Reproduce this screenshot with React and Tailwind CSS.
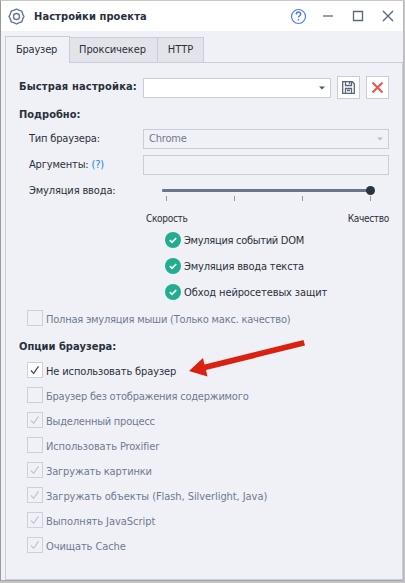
import React from "react";

const options = [
  ["Не использовать браузер", true, true, "tracking-[-0.13px]"],
  ["Браузер без отображения содержимого", false, false, "tracking-[-0.23px]"],
  ["Выделенный процесс", true, false, "tracking-[-0.22px]"],
  ["Использовать Proxifier", false, false, "tracking-[-0.12px]"],
  ["Загружать картинки", true, false, "tracking-[-0.17px]"],
  ["Загружать объекты (Flash, Silverlight, Java)", true, false, "tracking-[-0.07px]"],
  ["Выполнять JavaScript", true, false, "tracking-[-0.05px]"],
  ["Очищать Cache", true, false, "tracking-[-0.1px]"],
];

function Check({ label, checked, active, tracking = "" }) {
  return (
    <div className={`flex h-[25px] items-start ${active ? "text-[#29303b]" : "text-[#6f7a91]"}`}>
      <span className={`mr-[3px] flex size-4 shrink-0 items-center justify-center border border-[#cccfdd] ${active ? "bg-white" : ""}`}>
        {checked && (
          <svg width="10" height="10" viewBox="0 0 10 10" fill="none" stroke={active ? "#39424c" : "#c2c5cb"} strokeWidth="1.2">
            <path d="M1 5.5 3.7 8.3 8.5 1.3" />
          </svg>
        )}
      </span>
      <span className={`whitespace-nowrap leading-[20px] ${tracking}`}>{label}</span>
    </div>
  );
}

function Caret({ color }) {
  return (
    <svg width="6" height="4" viewBox="0 0 6 4" fill={color}>
      <path d="M0 0.5h6L3 3.5z" />
    </svg>
  );
}

function Feature({ label, tracking }) {
  return (
    <div className="flex h-[26px] items-start gap-[3px]">
      <svg width="16" height="16" viewBox="0 0 16 16">
        <circle cx="8" cy="8" r="8" fill="#22ad90" />
        <path d="M4.8 8.2 7 10.3 11.2 6" fill="none" stroke="#fff" strokeWidth="1.7" />
      </svg>
      <span className={`whitespace-nowrap leading-[17px] ${tracking}`}>{label}</span>
    </div>
  );
}

export default function App() {
  return (
    <div className="h-[583px] w-[405px] overflow-hidden bg-[#c4c4c4] font-['DejaVu_Sans_Condensed','DejaVu_Sans',sans-serif] text-[11px] text-[#29303b]">
      <div className="relative flex h-[581px] w-[404px] flex-col border border-t-[#c8c8c8] border-r-[#b9bac0] border-b-[#a5a6aa] border-l-[#999] bg-[#f0f1f6]">
        <header className="flex h-[30px] shrink-0 items-center bg-white pl-[7px]">
          <svg width="17" height="17" viewBox="0 0 17 17" fill="none" stroke="#69758b" strokeWidth="1.4">
            <path d="M8.5 1 10.7 2.2 13.8 3.2 14.8 6.3 16 8.5 14.8 10.7 13.8 13.8 10.7 14.8 8.5 16 6.3 14.8 3.2 13.8 2.2 10.7 1 8.5 2.2 6.3 3.2 3.2 6.3 2.2z" strokeLinejoin="round" />
            <circle cx="8.5" cy="8.5" r="3" />
          </svg>
          <h1 className="ml-[9px] whitespace-nowrap pt-[2px] font-bold tracking-[0.1px]">Настройки проекта</h1>
          <svg className="ml-auto mr-[-1px]" width="114" height="30" viewBox="0 0 114 30" fill="none">
            <circle cx="8.5" cy="15.5" r="7" stroke="#4d7df0" strokeWidth="1.2" />
            <path d="M6.3 13.5c0-3.3 4.6-3.1 4.4-.3-.1 1.6-2.2 1.6-2.2 3.4M8.5 18v1.5" stroke="#4d7df0" strokeWidth="1.5" />
            <path d="M33 15h10" stroke="#95a0ae" strokeWidth="2" />
            <path d="M63.5 10.5h9v9h-9z" stroke="#59667b" strokeWidth="1.3" />
            <path d="m93 10 10 10m0-10L93 20" stroke="#59667b" strokeWidth="1.4" />
          </svg>
        </header>
        <nav className="flex h-[31px] shrink-0 items-end pl-[4px]">
          <div className="z-10 -mb-px flex h-[27px] w-[65px] items-center justify-center border border-b-0 border-[#c8ccdc] bg-[#f0f1f6] pr-[2px] tracking-[-0.2px]">Браузер</div>
          <div className="flex h-[25px] w-[88px] items-center justify-center border-t border-r border-[#c8ccdc] bg-[#e3e4e9] pr-[2px] tracking-[-0.1px]">Проксичекер</div>
          <div className="flex h-[25px] w-[46px] items-center justify-center border-t border-r border-[#c8ccdc] bg-[#e3e4e9]">HTTP</div>
        </nav>
        <main className="ml-[4px] flex w-[398px] grow flex-col border border-[#c8ccdc]">
          <div className="mt-[13px] flex h-[23px] items-center pl-[13px]">
            <span className="w-[124px] whitespace-nowrap font-bold tracking-[0.17px]">Быстрая настройка:</span>
            <div className="flex h-5 w-[188px] items-center justify-end border border-[#c8ccdc] bg-white pr-[5px]"><Caret color="#4c5560" /></div>
            <button className="ml-[6px] flex size-[23px] items-center justify-center border border-[#c8ccdc] bg-white">
              <svg width="13" height="13" viewBox="0 0 13 13" fill="none" stroke="#59667b" strokeWidth="1.3">
                <path d="M.7.7h9.5l2.1 2.1v9.5H.7zM3.5.7v3.8h6V.7M3.5 12.3V7.5h6v4.8M5 9.500h3M7.5 1v2" />
              </svg>
            </button>
            <button className="ml-[6px] flex size-[23px] items-center justify-center border border-[#c8ccdc] bg-white">
              <svg width="11" height="11" viewBox="0 0 11 11" stroke="#e95350" strokeWidth="2"><path d="m.5.5 10 10m0-10-10 10" /></svg>
            </button>
          </div>
          <h2 className="mt-[8px] h-[16px] pl-[13px] leading-[16px] font-bold">Подробно:</h2>
          <div className="mt-[6px] flex h-5 pl-[23px]">
            <span className="w-[114px] whitespace-nowrap leading-[19px] tracking-[-0.2px]">Тип браузера:</span>
            <div className="flex w-[246px] items-center justify-between border border-[#c8ccdc] pr-[5px] pl-[5px] text-[#6f7a91] tracking-[-0.2px]">Chrome<Caret color="#b9bdc5" /></div>
          </div>
          <div className="mt-[6px] flex h-5 pl-[23px]">
            <span className="w-[114px] whitespace-nowrap leading-[20px] tracking-[-0.15px]">Аргументы: <span className="text-[#1683d8]">(?)</span></span>
            <div className="w-[246px] border border-[#c8ccdc]" />
          </div>
          <div className="mt-[6px] flex h-[26px] pl-[23px]">
            <span className="w-[133px] whitespace-nowrap leading-[20px] tracking-[-0.15px]">Эмуляция ввода:</span>
            <svg width="214" height="24" viewBox="0 0 214 24">
              <rect y="8" width="208" height="3" rx="1" fill="#69758b" />
              <circle cx="208.5" cy="9.5" r="4.5" fill="#29343e" />
              <path d="M4.5 15v5M72.5 15v5M140.500 15v5M208.500 15v5" stroke="#b58ba8" />
            </svg>
          </div>
          <div className="mt-[4px] flex h-[14px] justify-between pr-[13px] pl-[140px] text-[10px] leading-[15px] tracking-[-0.3px]">
            <span>Скорость</span><span>Качество</span>
          </div>
          <div className="mt-[7px] pl-[159px]">
            <Feature label="Эмуляция событий DOM" tracking="tracking-[-0.3px]" />
            <Feature label="Эмуляция ввода текста" tracking="tracking-[-0.18px]" />
            <Feature label="Обход нейросетевых защит" tracking="tracking-[-0.12px]" />
          </div>
          <div className="pl-[21px]"><Check label="Полная эмуляция мыши (Только макс. качество)" tracking="tracking-[-0.22px]" /></div>
          <h2 className="mt-[3px] h-[24px] pl-[13px] leading-[18px] font-bold">Опции браузера:</h2>
          <div className="pl-[21px]">
            {options.map(([label, checked, active, tracking]) => (
              <Check key={label} label={label} checked={checked} active={active} tracking={tracking} />
            ))}
          </div>
        </main>
        <svg className="absolute top-[334px] left-[187px]" width="120" height="44" viewBox="188 335 120 44">
          <path d="M189 371 203 358 204.500 364.500 303.500 340 305 345.500 206 370 207.500 376.500z" fill="#da2110" />
        </svg>
      </div>
    </div>
  );
}
